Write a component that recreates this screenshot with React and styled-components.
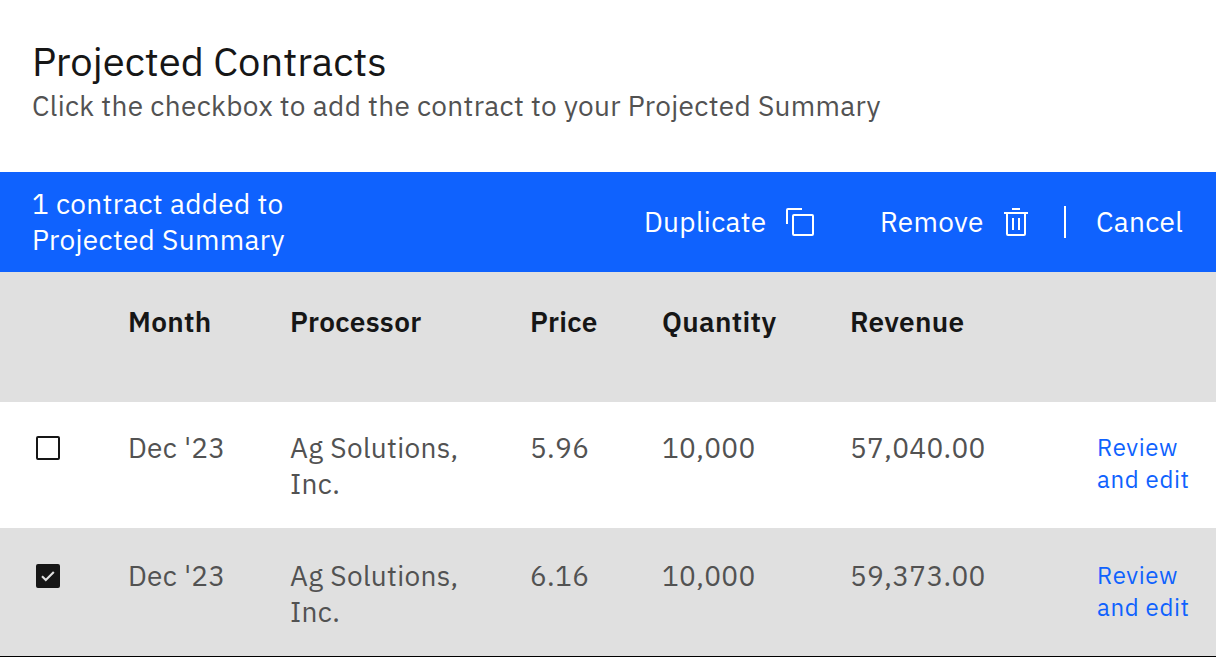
import React from 'react';
import styled, { createGlobalStyle } from 'styled-components';

const GlobalStyle = createGlobalStyle`
  * { box-sizing: border-box; }
  body {
    margin: 0;
    background: #fff;
    font-family: 'IBM Plex Sans', Roboto, sans-serif;
    color: #161616;
    -webkit-font-smoothing: antialiased;
  }
`;

const Panel = styled.main`
  width: 1216px;
  height: 657px;
  overflow: hidden;
  background: #fff;
`;

const Heading = styled.header`
  height: 172px;
  padding: 37px 32px 0;
`;

const Title = styled.h1`
  margin: 0;
  font-size: 40px;
  line-height: 48px;
  font-weight: 400;
  white-space: nowrap;
`;

const Subtitle = styled.p`
  margin: 3px 0 0;
  font-size: 28px;
  line-height: 36px;
  letter-spacing: 0.32px;
  color: #525252;
  white-space: nowrap;
`;

const BatchBar = styled.section`
  display: flex;
  align-items: center;
  height: 100px;
  padding-left: 32px;
  background: #0f62fe;
  color: #fff;
  font-size: 28px;
  line-height: 36px;
  letter-spacing: 0.32px;
`;

const BatchSummary = styled.div`
  width: 612px;
  white-space: nowrap;
`;

const Action = styled.button`
  display: flex;
  flex: none;
  align-items: center;
  justify-content: space-between;
  width: ${(p) => p.$width}px;
  margin-right: ${(p) => p.$after || 0}px;
  padding: 0;
  border: 0;
  background: none;
  color: inherit;
  font: inherit;
  letter-spacing: inherit;
  white-space: nowrap;
`;

const Icon = styled.svg`
  display: block;
  width: 32px;
  height: 32px;
  flex: none;
`;

const Divider = styled.span`
  width: 2px;
  height: 32px;
  margin-right: 30px;
  background: #fff;
`;

const Row = styled.div`
  display: grid;
  grid-template-columns: 128px 162px 240px 132px 188px 247px 1fr;
  align-items: start;
  height: ${(p) => p.$height}px;
  padding-top: ${(p) => p.$top}px;
  background: ${(p) => (p.$shaded ? '#e0e0e0' : '#fff')};
  border-bottom: ${(p) => (p.$last ? '1px solid #000' : '0')};
  font-size: 28px;
  line-height: 36px;
  letter-spacing: 0.32px;
`;

const HeadCell = styled.div`
  font-weight: 600;
`;

const Cell = styled.div`
  color: #525252;
  white-space: nowrap;
`;

const Checkbox = styled.span`
  display: block;
  width: 24px;
  height: 24px;
  margin: 6px 0 0 36px;
  border: 2px solid #161616;
  border-radius: 2px;
  background: ${(p) => (p.$checked ? '#161616' : 'transparent')};
`;

const Tick = styled.svg`
  display: block;
  width: 20px;
  height: 20px;
`;

const EditLink = styled.a`
  margin-top: 1px;
  font-size: 24px;
  line-height: 32px;
  letter-spacing: 0.64px;
  color: #0f62fe;
  white-space: nowrap;
`;

const contracts = [
  { price: '5.96', revenue: '57,040.00', checked: false },
  { price: '6.16', revenue: '59,373.00', checked: true },
];

function CopyIcon() {
  return (
    <Icon viewBox="0 0 32 32" fill="#fff">
      <path d="M28 10v18H10V10h18m0-2H10a2 2 0 0 0-2 2v18a2 2 0 0 0 2 2h18a2 2 0 0 0 2-2V10a2 2 0 0 0-2-2Z" />
      <path d="M4 18H2V4a2 2 0 0 1 2-2h14v2H4Z" />
    </Icon>
  );
}

function TrashIcon() {
  return (
    <Icon viewBox="0 0 32 32" fill="#fff">
      <path d="M12 12h2v12h-2zM18 12h2v12h-2zM4 6v2h2v20a2 2 0 0 0 2 2h16a2 2 0 0 0 2-2V8h2V6Zm4 22V8h16v20ZM12 2h8v2h-8z" />
    </Icon>
  );
}

export default function App() {
  return (
    <Panel>
      <GlobalStyle />
      <Heading>
        <Title>Projected Contracts</Title>
        <Subtitle>Click the checkbox to add the contract to your Projected Summary</Subtitle>
      </Heading>
      <BatchBar>
        <BatchSummary>
          1 contract added to
          <br />
          Projected Summary
        </BatchSummary>
        <Action $width={172} $after={64}>
          Duplicate
          <CopyIcon />
        </Action>
        <Action $width={152} $after={32}>
          Remove
          <TrashIcon />
        </Action>
        <Divider />
        <Action $width={88}>Cancel</Action>
      </BatchBar>
      <Row $height={130} $top={32} $shaded>
        <span />
        <HeadCell>Month</HeadCell>
        <HeadCell>Processor</HeadCell>
        <HeadCell>Price</HeadCell>
        <HeadCell>Quantity</HeadCell>
        <HeadCell>Revenue</HeadCell>
      </Row>
      {contracts.map((c) => (
        <Row
          key={c.revenue}
          $height={c.checked ? 129 : 126}
          $top={c.checked ? 30 : 28}
          $shaded={c.checked}
          $last={c.checked}
        >
          <Checkbox $checked={c.checked}>
            {c.checked && (
              <Tick viewBox="0 0 20 20" fill="none" stroke="#e0e0e0" strokeWidth="2.1">
                <path d="M4 10.2 7.8 14 15.8 6" />
              </Tick>
            )}
          </Checkbox>
          <Cell>Dec '23</Cell>
          <Cell>
            Ag Solutions,
            <br />
            Inc.
          </Cell>
          <Cell>{c.price}</Cell>
          <Cell>10,000</Cell>
          <Cell>{c.revenue}</Cell>
          <EditLink>
            Review
            <br />
            and edit
          </EditLink>
        </Row>
      ))}
    </Panel>
  );
}
